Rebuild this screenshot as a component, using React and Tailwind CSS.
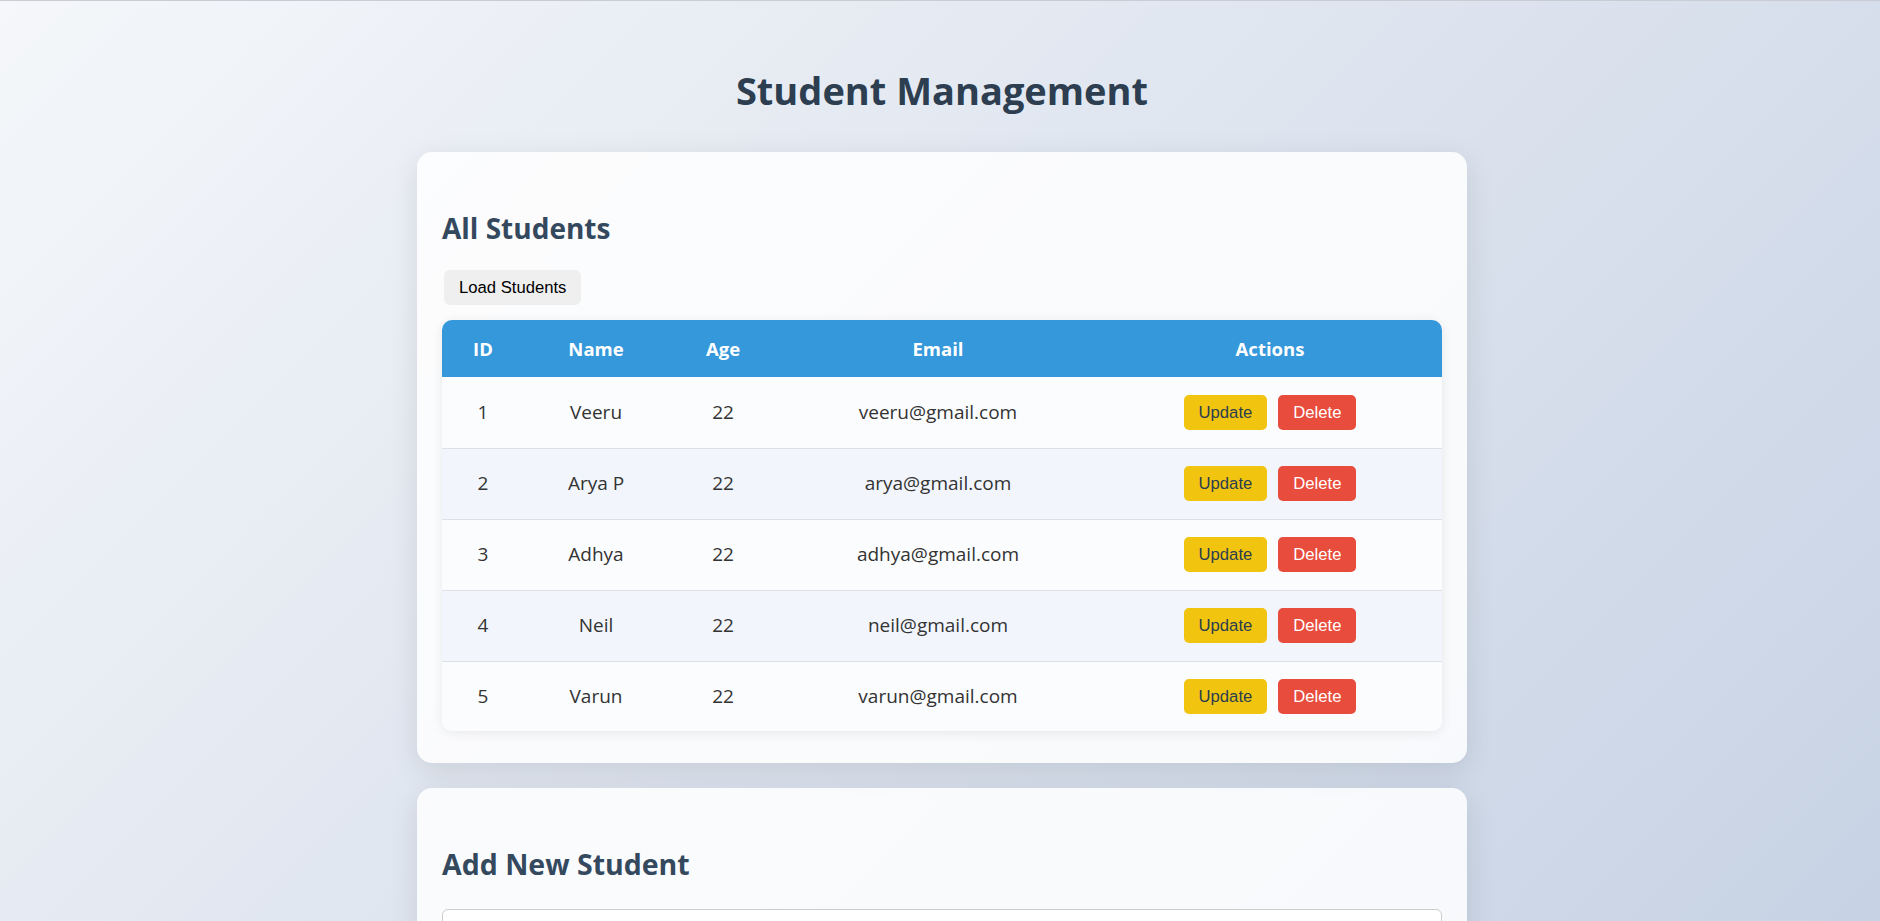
import React, { useState } from "react";

const students = [
  { id: 1, name: "Veeru", age: 22, email: "veeru@gmail.com" },
  { id: 2, name: "Arya P", age: 22, email: "arya@gmail.com" },
  { id: 3, name: "Adhya", age: 22, email: "adhya@gmail.com" },
  { id: 4, name: "Neil", age: 22, email: "neil@gmail.com" },
  { id: 5, name: "Varun", age: 22, email: "varun@gmail.com" },
];

const App = () => {
  const [rows] = useState(students);

  return (
    <div className="min-h-screen w-full border-t border-[#c9cdd3] bg-linear-135 from-[#f5f7fa] to-[#c3cfe2] pb-[60px] pl-[4px] font-['Open_Sans',sans-serif]">
      {/* Page title */}
      <h1 className="pt-[65px] text-center text-[38px] leading-[48px] font-bold text-[#2c3e50]">
        Student Management
      </h1>

      {/* Student list card */}
      <div className="mx-auto mt-[38px] w-[1050px] rounded-[15px] bg-white/85 px-[25px] pt-[56px] pb-[32px] shadow-[0_8px_30px_rgba(0,0,0,0.1)]">
        <h2 className="text-[28px] leading-[40px] font-bold text-[#34495e]">
          All Students
        </h2>
        <button
          type="button"
          className="mt-[22px] ml-[2px] h-[35px] rounded-[6px] bg-[#efefef] px-[15px] font-['Liberation_Sans',sans-serif] text-[16.67px] text-black"
        >
          Load Students
        </button>

        {/* Students table */}
        <div className="mt-[15px] overflow-hidden rounded-[10px] shadow-[0_2px_12px_rgba(0,0,0,0.08)]">
          <table className="w-full table-fixed border-collapse text-[19px]">
            <colgroup>
              <col className="w-[82px]" />
              <col className="w-[144px]" />
              <col className="w-[110px]" />
              <col className="w-[320px]" />
              <col />
            </colgroup>
            <thead>
              <tr className="h-[57px] bg-[#3498db] text-[18.5px] text-white">
                <th className="font-bold">ID</th>
                <th className="font-bold">Name</th>
                <th className="font-bold">Age</th>
                <th className="font-bold">Email</th>
                <th className="font-bold">Actions</th>
              </tr>
            </thead>
            <tbody className="text-[#333]">
              {rows.map((s, idx) => (
                <tr
                  key={s.id}
                  className={`h-[71px] last:h-[70px] ${idx % 2 === 1 ? "bg-[#f2f6fc]" : "bg-[#fbfcfe]"} ${idx < rows.length - 1 ? "border-b border-[#dde1e6]" : ""}`}
                >
                  <td className="text-center">{s.id}</td>
                  <td className="text-center">{s.name}</td>
                  <td className="text-center">{s.age}</td>
                  <td className="text-center">{s.email}</td>
                  <td className="text-center">
                    <div className="flex items-center justify-center gap-[11px] font-['Liberation_Sans',sans-serif] text-[16.67px]">
                      <button
                        type="button"
                        className="h-[35px] rounded-[5px] bg-[#f1c40f] px-[15px] text-[#2c3e50]"
                      >
                        Update
                      </button>
                      <button
                        type="button"
                        className="h-[35px] rounded-[5px] bg-[#e74c3c] px-[15px] text-white"
                      >
                        Delete
                      </button>
                    </div>
                  </td>
                </tr>
              ))}
            </tbody>
          </table>
        </div>
      </div>

      {/* Add student card */}
      <div className="mx-auto mt-[25px] w-[1050px] rounded-[15px] bg-white/85 px-[25px] pt-[56px] pb-[32px] shadow-[0_8px_30px_rgba(0,0,0,0.1)]">
        <h2 className="text-[28.5px] leading-[40px] font-bold text-[#34495e]">
          Add New Student
        </h2>
        <form className="mt-[25px] flex flex-col gap-[15px]">
          <input
            type="text"
            className="h-[46px] rounded-[6px] border border-[#ccc] bg-white px-[12px] text-[19px]"
          />
          <input
            type="number"
            className="h-[46px] rounded-[6px] border border-[#ccc] bg-white px-[12px] text-[19px]"
          />
          <input
            type="email"
            className="h-[46px] rounded-[6px] border border-[#ccc] bg-white px-[12px] text-[19px]"
          />
        </form>
      </div>
    </div>
  );
};

export default App;
